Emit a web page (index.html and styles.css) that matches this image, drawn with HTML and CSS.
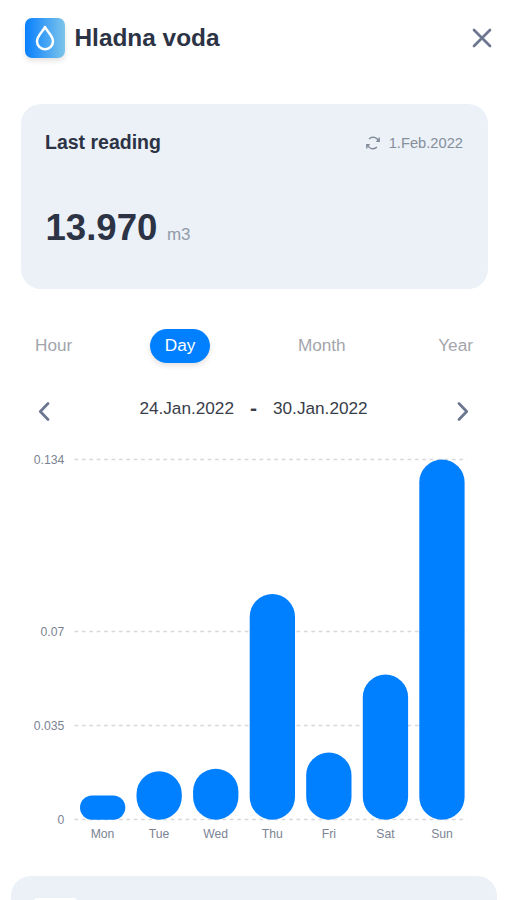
FILE: index.html
```html
<!DOCTYPE html>
<html lang="en">
<head>
<meta charset="utf-8">
<title>Hladna voda</title>
<link rel="stylesheet" href="styles.css">
</head>
<body>
<header class="header">
  <span class="logo">
    <svg width="40" height="40" viewBox="0 0 40 40" fill="none" stroke="#fff" stroke-width="2.5" stroke-linejoin="round"><path d="M20 9C18.3 13 12 17.8 12 23.2a8 8 0 0 0 16 0C28 17.8 21.7 13 20 9Z"/></svg>
  </span>
  <h1 class="title">Hladna voda</h1>
  <svg class="close" width="20" height="20" viewBox="0 0 20 20" fill="none" stroke="#6c7690" stroke-width="2.7" stroke-linecap="round"><path d="M2 2 18 18M18 2 2 18"/></svg>
</header>

<section class="reading">
  <div class="reading-head">
    <h2 class="reading-title">Last reading</h2>
    <svg class="sync" width="14" height="14" viewBox="0 0 14 14" fill="none" stroke="#828b98" stroke-width="1.4"><path d="M3 2.9A5.7 5.7 0 0 1 12.5 5.4M13.2 1.6V5.4H10.2M11 11.1A5.7 5.7 0 0 1 1.5 8.6M.8 12.4V8.6H3.8"/></svg>
    <span class="reading-date">1.Feb.2022</span>
  </div>
  <div class="reading-value"><strong>13.970</strong><span>m3</span></div>
</section>

<nav class="tabs">
  <span>Hour</span>
  <span class="active">Day</span>
  <span class="month">Month</span>
  <span>Year</span>
</nav>

<div class="range">
  <svg width="12" height="20" viewBox="0 0 12 20" fill="none" stroke="#6c7690" stroke-width="2.7" stroke-linecap="round" stroke-linejoin="round"><path d="M10 2.5 2.3 10.5 10 18.5"/></svg>
  <div class="dates"><span>24.Jan.2022</span><b>-</b><span>30.Jan.2022</span></div>
  <svg width="12" height="20" viewBox="0 0 12 20" fill="none" stroke="#6c7690" stroke-width="2.7" stroke-linecap="round" stroke-linejoin="round"><path d="M2 2.5 9.7 10.5 2 18.5"/></svg>
</div>

<svg class="chart" width="507" height="400" viewBox="0 450 507 400">
  <g class="grid">
    <path d="M74.5 459.5H467M74.5 631.5H467M74.5 725.5H467M74.5 819.5H467"/>
  </g>
  <g class="bars">
    <rect x="80" y="795.5" width="45.3" height="24.2" rx="12.1"/>
    <rect x="136.5" y="771.3" width="45.3" height="48.4" rx="22.65"/>
    <rect x="193.1" y="768.7" width="45.3" height="51" rx="22.65"/>
    <rect x="249.7" y="594" width="45.3" height="225.7" rx="22.65"/>
    <rect x="306.2" y="752.5" width="45.3" height="67.2" rx="22.65"/>
    <rect x="362.8" y="674.5" width="45.3" height="145.2" rx="22.65"/>
    <rect x="419.3" y="459.5" width="45.3" height="360.2" rx="22.65"/>
  </g>
  <g class="y-labels">
    <text x="64.3" y="464">0.134</text>
    <text x="64.3" y="636">0.07</text>
    <text x="64.3" y="730">0.035</text>
    <text x="64.3" y="824">0</text>
  </g>
  <g class="x-labels">
    <text x="102.5" y="838.3">Mon</text>
    <text x="159" y="838.3">Tue</text>
    <text x="215.6" y="838.3">Wed</text>
    <text x="272.2" y="838.3">Thu</text>
    <text x="328.8" y="838.3">Fri</text>
    <text x="385.4" y="838.3">Sat</text>
    <text x="442" y="838.3">Sun</text>
  </g>
</svg>

<section class="next-card"><div class="next-icon"></div></section>
</body>
</html>
```
FILE: styles.css
```css
* { box-sizing: border-box; }
body {
  margin: 0;
  height: 900px;
  overflow: hidden;
  background: #fff;
  color: #2c3345;
  font-family: "Liberation Sans", Arial, sans-serif;
}
svg { display: block; flex: none; }
h1, h2 { margin: 0; }

.header {
  display: flex;
  align-items: center;
  height: 76px;
  padding: 0 15px 0 25px;
}
.logo {
  width: 40px;
  height: 40px;
  border-radius: 7px;
  background: linear-gradient(90deg, #087fff, #7cc5ea);
  box-shadow: 0 3px 5px rgba(60, 40, 30, .13);
}
.title {
  flex: 1;
  margin-left: 9.5px;
  font-size: 24.4px;
  line-height: 28px;
}

.reading {
  height: 185px;
  margin: 28px 19.5px 0 20.5px;
  padding: 26px 24.5px 0;
  border-radius: 20px;
  background: #ebf1f7;
}
.reading-head {
  display: flex;
  align-items: center;
  height: 25px;
}
.reading-title {
  flex: 1;
  font-size: 19.5px;
  line-height: 25px;
}
.reading-date {
  margin-left: 9px;
  font-size: 14.7px;
  color: #858e9b;
}
.reading-value {
  display: flex;
  align-items: baseline;
  margin-top: 51px;
  padding-left: .5px;
  line-height: 44px;
}
.reading-value strong { font-size: 36.6px; }
.reading-value span {
  margin-left: 9.5px;
  font-size: 17px;
  color: #929ba8;
}

.tabs {
  display: flex;
  justify-content: space-between;
  align-items: center;
  height: 34px;
  margin-top: 39.5px;
  padding: 0 34px 0 35px;
  color: #a3a5ac;
  font-size: 17.2px;
}
.tabs .active {
  width: 60.5px;
  height: 34px;
  margin-right: 10px;
  border-radius: 17px;
  background: #007fff;
  box-shadow: 0 3px 5px rgba(60, 40, 30, .13);
  color: #fff;
  line-height: 33px;
  text-align: center;
}
.tabs .month { margin-right: 15px; }

.range {
  display: flex;
  align-items: center;
  justify-content: space-between;
  height: 39px;
  margin-top: 29px;
  padding: 0 38px;
}
.dates {
  display: flex;
  align-items: center;
  gap: 16px;
  margin-top: -6px;
  color: #393d49;
  font-size: 17.2px;
}
.dates b { font-size: 21px; }

.chart { margin-top: 19.5px; }
.grid { stroke: #d5d8dd; stroke-width: 1.4; stroke-dasharray: 3.7 3.7; }
.bars { fill: #007fff; }
.y-labels, .x-labels { font-size: 12.2px; fill: #7b8393; }
.y-labels { text-anchor: end; }
.x-labels { text-anchor: middle; }

.next-card {
  height: 60px;
  margin: 26px 10px 0 11px;
  padding: 21.5px 23px 0;
  border-radius: 20px;
  background: #ebf1f7;
}
.next-icon {
  width: 43px;
  height: 38px;
  border-radius: 3px;
  background: #fff;
}
```
